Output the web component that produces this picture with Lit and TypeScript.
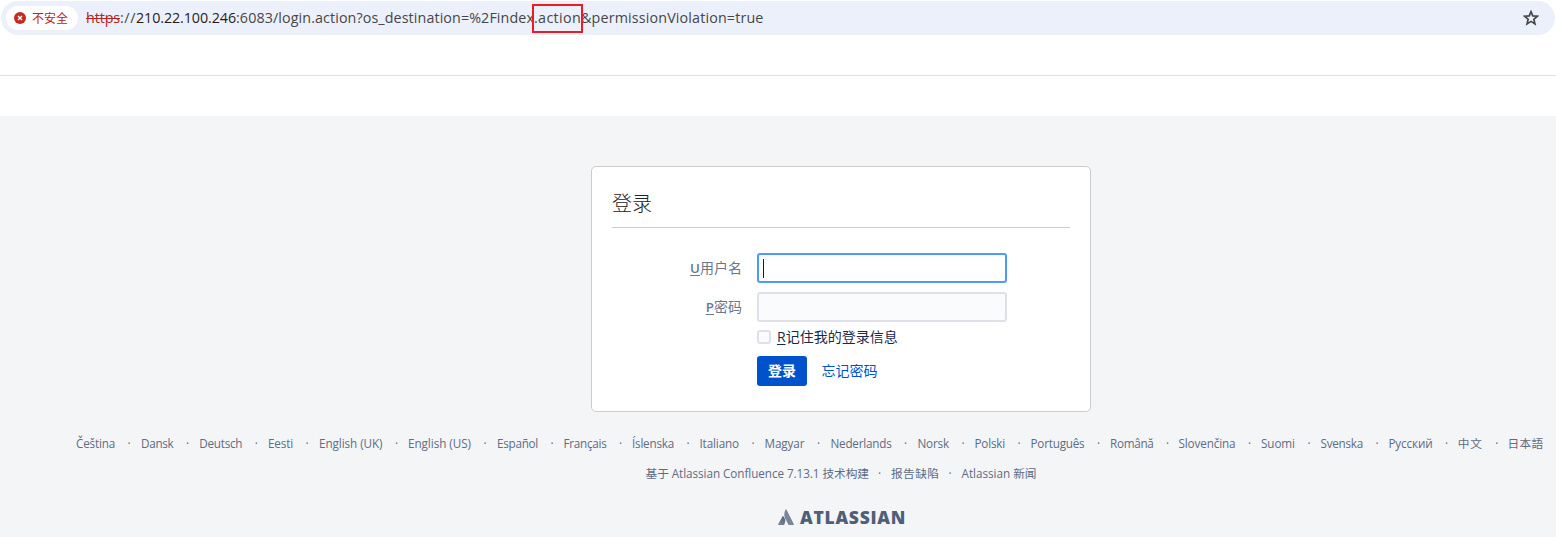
import { LitElement, html, css, svg } from "lit";
import { customElement, property } from "lit/decorators.js";

/** Inline label whose tracking is adjusted so that it fills a given width. */
@customElement("fit-text")
class FitText extends LitElement {
  @property({ type: Number }) width = 0;
  @property({ type: Boolean }) struck = false;

  static styles = css`
    :host { display: inline-block; white-space: pre; }
    .run { display: inline-block; }
    .struck { text-decoration: line-through; text-decoration-thickness: 1px; }
  `;

  render() {
    return html`<span class="run ${this.struck ? "struck" : ""}"><slot></slot></span>`;
  }

  firstUpdated() {
    const run = this.renderRoot.querySelector(".run") as HTMLElement;
    const count = (this.textContent || "").length;
    const natural = run.getBoundingClientRect().width;
    this.style.width = `${this.width}px`;
    run.style.letterSpacing = `${(this.width - natural) / count}px`;
  }
}

// name, label width, distance to the next label
const LANGUAGES: [string, number, number][] = [
  ["Čeština", 39, 65], ["Dansk", 32.5, 58.3], ["Deutsch", 43, 68.7], ["Eesti", 25, 51],
  ["English (UK)", 63.5, 89], ["English (US)", 63, 89], ["Español", 41, 66.5],
  ["Français", 43, 68.5], ["Íslenska", 42, 67.5], ["Italiano", 39.5, 65],
  ["Magyar", 40, 66], ["Nederlands", 61, 87], ["Norsk", 31.5, 57], ["Polski", 30.5, 56],
  ["Português", 54, 79.5], ["Română", 43.5, 68.5], ["Slovenčina", 57, 82.5],
  ["Suomi", 34, 59.5], ["Svenska", 42.5, 68], ["Русский", 44, 69.2],
  ["中文", 25, 49.8], ["日本語", 36, 36],
];

@customElement("app-root")
class AppRoot extends LitElement {
  static styles = css`
    :host {
      display: block; height: 537px; overflow: hidden; background: #fff;
      font-family: "Open Sans", "Noto Sans CJK SC", sans-serif;
      font-size: 14px; color: #172b4d;
    }
    * { box-sizing: border-box; }
    .address {
      display: flex; align-items: center; height: 34px; margin: 1px 1px 0;
      border-radius: 17px; background: #ebf0fa; padding: 0 16px 0 5px;
    }
    .chip {
      display: flex; align-items: center; gap: 6px; width: 72px; height: 24px;
      padding-left: 8px; border-radius: 12px; background: #fff;
      color: #b3261e; font-size: 12px; white-space: nowrap;
    }
    .chip svg { width: 12px; height: 12px; flex: none; }
    .url {
      position: relative; display: flex; margin-left: 8px; flex: 1;
      font-size: 14.3px; line-height: 24px; color: #474747;
    }
    .scheme { color: #b3261e; }
    .host { color: #1f1f1f; }
    .mark {
      position: absolute; left: 446px; top: -2px; width: 51px; height: 29px;
      border: 2px solid #ec1c24;
    }
    .star { width: 16px; height: 16px; }
    .strip { height: 41px; border-bottom: 1px solid #dfe1e5; }
    .space { height: 40px; }
    .page {
      height: 421px; padding-top: 50px; background: #f4f5f7;
    }
    .card {
      width: 500px; height: 246px; margin-left: 591px; padding: 19px 20px 0;
      border: 1px solid #ccc; border-radius: 5px; background: #fff;
    }
    h1 {
      margin: 0 0 25px; height: 42px; border-bottom: 1px solid #ccc;
      font-size: 20px; line-height: 36px; font-weight: 300; color: #222;
    }
    .row { display: flex; align-items: center; height: 30px; margin-bottom: 9px; }
    label { width: 130px; margin-right: 15px; text-align: right; color: #6b778c; line-height: 20px; }
    u { text-underline-offset: 2px; text-decoration-thickness: 1px; }
    label u { font-weight: 600; font-size: 13.3px; }
    .input {
      display: flex; align-items: center; width: 250px; height: 30px; padding-left: 4px;
      border: 2px solid #dfe1e6; border-radius: 3px; background: #fafbfc;
    }
    .focus { border-color: #4c9aff; background: #fff; }
    .caret { width: 1px; height: 19px; background: #091e42; }
    .remember {
      display: flex; align-items: center; gap: 6px; height: 20px;
      margin: -4px 0 9px 145px; line-height: 20px;
    }
    .box {
      width: 14px; height: 14px; border: 2px solid #dfe1e6;
      border-radius: 3px; background: #fafbfc;
    }
    .actions { display: flex; align-items: center; gap: 14.5px; margin-left: 145px; }
    .button {
      width: 50px; height: 30px; border-radius: 3px; background: #0052cc; color: #fff;
      font-weight: 700; line-height: 30px; text-align: center;
    }
    .link { color: #0052cc; line-height: 30px; }
    .langs, .about { display: flex; font-size: 11.7px; line-height: 20px; color: #5e6c84; }
    .langs { margin: 21px 0 0 76px; }
    .lang { display: flex; flex: none; white-space: nowrap; }
    .dot { padding-left: 12.5px; }
    .about { margin: 10px 0 0 645.5px; }
    .about .dot { width: 22px; padding-left: 9px; }
    .brand {
      display: flex; align-items: center; gap: 6px; height: 18px; margin: 25px 0 0 778px;
      color: #505f79; font-size: 17.5px; line-height: 18px; font-weight: 800;
    }
    .brand svg { width: 16px; height: 16px; }
  `;

  render() {
    return html`
      <div class="address">
        <div class="chip">
          <svg viewBox="0 0 12 12">${svg`
            <circle cx="6" cy="6" r="6" fill="#c5291f"/>
            <path d="M4 4l4 4M8 4l-4 4" stroke="#fff" stroke-width="1.4"/>`}
          </svg>
          <span>不安全</span>
        </div>
        <div class="url">
          <fit-text class="scheme" struck width="34">https</fit-text><fit-text width="16">://</fit-text><fit-text class="host" width="100">210.22.100.246</fit-text><fit-text width="298">:6083/login.action?os_destination=%2Findex</fit-text><fit-text width="47">.action</fit-text><fit-text width="182.5">&amp;permissionViolation=true</fit-text>
          <div class="mark"></div>
        </div>
        <svg class="star" viewBox="0 0 16 16">
          <path d="M8 1.6l1.75 4.25 4.65.4-3.55 3.05 1.1 4.55L8 11.4l-3.95 2.45 1.1-4.55L1.6 6.25l4.65-.4z" fill="none" stroke="#474747" stroke-width="1.7"/>
        </svg>
      </div>
      <div class="strip"></div>
      <div class="space"></div>
      <div class="page">
        <div class="card">
          <h1>登录</h1>
          <div class="row"><label><u>U</u>用户名</label><div class="input focus"><div class="caret"></div></div></div>
          <div class="row"><label><u>P</u>密码</label><div class="input"></div></div>
          <div class="remember"><div class="box"></div><span><u>R</u>记住我的登录信息</span></div>
          <div class="actions"><div class="button">登录</div><div class="link">忘记密码</div></div>
        </div>
        <div class="langs">
          ${LANGUAGES.map(([name, width, pitch], i) => html`<div class="lang" style="width:${pitch}px"><fit-text width=${width}>${name}</fit-text>${i < LANGUAGES.length - 1 ? html`<span class="dot">·</span>` : ""}</div>`)}
        </div>
        <div class="about">
          <fit-text width="223.5">基于 Atlassian Confluence 7.13.1 技术构建</fit-text><span class="dot">·</span><fit-text width="48.5">报告缺陷</fit-text><span class="dot">·</span><fit-text width="75">Atlassian 新闻</fit-text>
        </div>
        <div class="brand">
          <svg viewBox="0 0 16 16">
            <defs>
              <linearGradient id="leg" x1=".9" y1="0" x2=".3" y2="1">
                <stop offset="0" stop-color="#505f79"/><stop offset="1" stop-color="#7a869a"/>
              </linearGradient>
            </defs>
            <path d="M7.6.4Q8 0 8.4.4L15.9 15.3Q16 16 15.4 16H10.6L7 9.2Q5.3 5 7.6.4z" fill="#7a869a"/>
            <path d="M4.6 7.2Q5 6.8 5.4 7.3Q8.5 11 6.4 15.3L6 16H.6Q0 16 .1 15.3z" fill="url(#leg)"/>
          </svg>
          <fit-text width="106">ATLASSIAN</fit-text>
        </div>
      </div>
    `;
  }
}
